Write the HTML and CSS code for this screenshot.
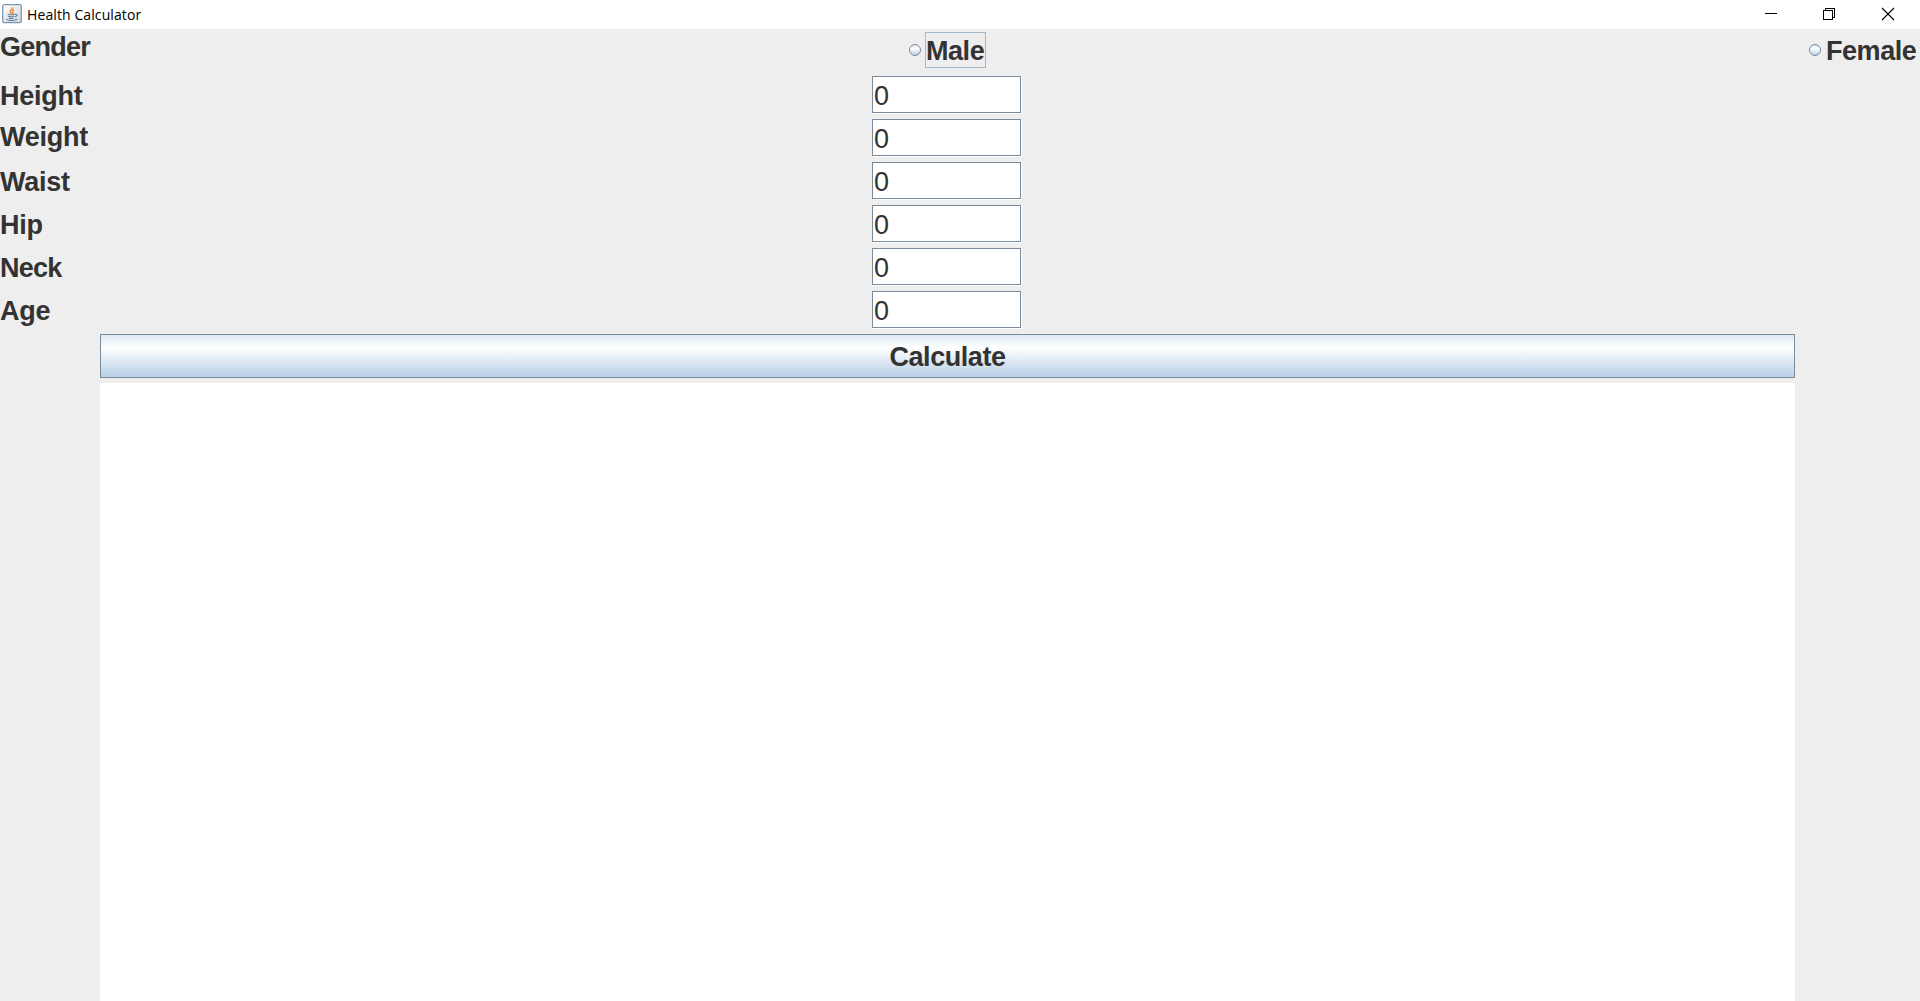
FILE: index.html
```html
<!DOCTYPE html>
<html lang="en">
<head>
<meta charset="utf-8">
<title>Health Calculator</title>
<link rel="stylesheet" href="styles.css">
</head>
<body>
<header class="titlebar">
  <svg class="app-icon" width="20" height="20" viewBox="0 0 20 20">
    <defs>
      <linearGradient id="tile" x1="0" y1="0" x2="1" y2="1"><stop offset="0" stop-color="#fff"/><stop offset="1" stop-color="#cfd6de"/></linearGradient>
    </defs>
    <rect x=".7" y=".7" width="18.6" height="18" rx="1.5" fill="url(#tile)" stroke="#7f97b0" stroke-width="1.3"/>
    <path d="M10.5 3.2C11 5.200 7.300 6 8.300 8.200L9.500 10M11.800 5.500C9.500 7 11.500 8 10.200 9.800" fill="none" stroke="#ec9148" stroke-width="1.5"/>
    <path d="M5.500 10.200Q9 11.300 12.800 10.200M6 12.300Q9 13.300 12 12.300M6.800 14.200Q9 15 11.500 14.200M13 10.300Q15.800 10 14.500 12L12.800 13M4 15.300Q9 18 15.500 15.300" fill="none" stroke="#6885a3" stroke-width="1.2"/>
  </svg>
  <span class="title">Health Calculator</span>
  <svg class="controls" width="138" height="14" viewBox="0 0 138 14" fill="none" stroke="#000" shape-rendering="crispEdges">
    <path d="M0 6.500H12"/>
    <path d="M58.500 3.500H67.500V12.500H58.500ZM60.500 3V1.500H69.500V10.500H68"/>
    <path d="M117 1L129 13M129 1L117 13" shape-rendering="auto" stroke-width="1.100"/>
  </svg>
</header>
<main class="form">
  <div class="gender">
    <span class="label tight">Gender</span>
    <label class="option"><span class="radio"></span><span class="caption focused">Male</span></label>
    <label class="option female"><span class="radio"></span><span class="caption">Female</span></label>
  </div>
  <div class="row"><span class="label">Height</span><span class="field">0</span></div>
  <div class="row"><span class="label raised">Weight</span><span class="field">0</span></div>
  <div class="row"><span class="label">Waist</span><span class="field">0</span></div>
  <div class="row"><span class="label">Hip</span><span class="field">0</span></div>
  <div class="row"><span class="label tight">Neck</span><span class="field">0</span></div>
  <div class="row"><span class="label">Age</span><span class="field">0</span></div>
  <button class="calculate">Calculate</button>
  <div class="output"></div>
</main>
</body>
</html>
```
FILE: styles.css
```css
* { box-sizing: border-box; }
body {
  margin: 0;
  height: 1001px;
  overflow: hidden;
  display: flex;
  flex-direction: column;
  background: #eee;
  color: #333;
  font: bold 27px/30px "Liberation Sans", Arial, sans-serif;
  letter-spacing: -0.45px;
}
.titlebar {
  height: 29px;
  flex: none;
  display: flex;
  background: #fff;
}
.app-icon { margin: 4px 0 0 2px; }
.title {
  margin: 6px 0 0 5px;
  font: 14px/17px "Open Sans", "Noto Sans", sans-serif;
  letter-spacing: 0.1px;
  color: #000;
}
.controls { margin: 7px 17px 0 auto; }
.form {
  flex: 1;
  display: flex;
  flex-direction: column;
}
.gender {
  height: 47px;
  flex: none;
  display: grid;
  grid-template-columns: 909px 900px 1fr;
  padding-top: 3px;
}
.option { display: flex; }
.radio {
  width: 12px;
  height: 12px;
  margin: 12px 4px 0 0;
  border: 1px solid #7a8a99;
  border-radius: 50%;
  background: linear-gradient(#dde8f3, #fff 35%, #b8cfe5);
}
.caption {
  height: 36px;
  padding: 3px 1px 0 0;
  border: 1px solid transparent;
}
.focused { border-color: #a3b8cc; width: 61px; }
.row {
  height: 43px;
  flex: none;
  display: grid;
  grid-template-columns: 872px 150px;
}
.label { padding-top: 5px; letter-spacing: -0.25px; }
.tight { letter-spacing: -0.75px; }
.raised { padding-top: 3px; }
.gender .label { padding-top: 0; }
.field {
  height: 37px;
  width: 149px;
  padding: 4px 0 0 1px;
  border: 1px solid #7a8a99;
  background: #fff;
  box-shadow: 1px 1px #fff;
  font-weight: normal;
}
.calculate {
  flex: none;
  width: 1695px;
  height: 44px;
  margin: 0 0 5px 100px;
  padding: 2px 0 0;
  border: 1px solid #7a8a99;
  background: linear-gradient(#dde8f3, #fff 30%, #b8cfe5);
  color: inherit;
  font: inherit;
  letter-spacing: inherit;
}
.output {
  flex: 1;
  width: 1695px;
  margin-left: 100px;
  background: #fff;
}
```
